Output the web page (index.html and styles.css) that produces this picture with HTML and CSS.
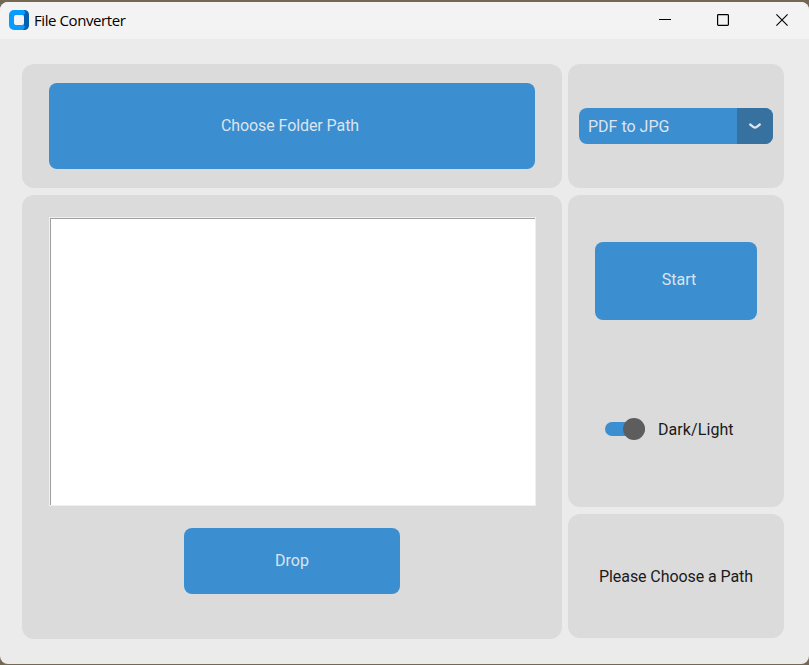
FILE: index.html
```html
<!DOCTYPE html>
<html lang="en">
<head>
<meta charset="utf-8">
<title>File Converter</title>
<link rel="stylesheet" href="styles.css">
</head>
<body>
<div class="window">
  <header class="titlebar">
    <svg class="logo" width="20" height="20" viewBox="0 0 20 20">
      <path fill="#069bff" d="M5 0h11l-1 20H5a5 5 0 0 1-5-5V5a5 5 0 0 1 5-5z"/>
      <path fill="#0560ae" d="M14 0h1.500a4.500 4.500 0 0 1 4.500 4.500v11a4.500 4.500 0 0 1-4.500 4.500H14l1-5V5z"/>
      <path fill="#069bff" d="M11 0h4l1.500 2.500L14 6h-3zM11 14h3l2 3-2 3h-3z"/>
      <rect x="5" y="5" width="10" height="10" rx="2" fill="#f3f3f3"/>
    </svg>
    <h1 class="title">File Converter</h1>
    <div class="controls">
      <svg width="12" height="12" viewBox="0 0 12 12"><path d="M0 5.500h12" stroke="#000"/></svg>
      <svg width="12" height="12" viewBox="0 0 12 12"><rect x=".6" y=".6" width="10.800" height="10.800" rx=".8" fill="none" stroke="#000" stroke-width="1.200"/></svg>
      <svg class="close" width="12" height="12" viewBox="0 0 12 12"><path d="M.4.400l11.200 11.200M11.600.400L.4 11.600" stroke="#000" stroke-width="1.100"/></svg>
    </div>
  </header>
  <main class="content">
    <div class="column">
      <section class="panel folder"><button class="btn choose">Choose Folder Path</button></section>
      <section class="panel files">
        <div class="listbox"></div>
        <button class="btn drop">Drop</button>
      </section>
    </div>
    <div class="column">
      <section class="panel format">
        <button class="select">
          <span class="value">PDF to JPG</span>
          <span class="arrow"><svg width="14" height="8" viewBox="0 0 14 8"><path d="M2.200 2.500L5.500 5.100Q7 6 8.500 5.100L11.800 2.500" fill="none" stroke="#dce4ee" stroke-width="2.300" stroke-linecap="round"/></svg></span>
        </button>
      </section>
      <section class="panel actions">
        <button class="btn start">Start</button>
        <div class="switch"><span class="track"><span class="knob"></span></span><span class="label">Dark/Light</span></div>
      </section>
      <section class="panel status">Please Choose a Path</section>
    </div>
  </main>
</div>
</body>
</html>
```
FILE: styles.css
```css
* { box-sizing: border-box; }
body {
  margin: 0;
  height: 665px;
  padding: 2px 0 1px;
  background: #746854;
  font: 16px/20px Roboto, sans-serif;
  color: #1a1a1a;
  overflow: hidden;
}
button { border: 0; font: inherit; color: #dce4ee; }
svg { display: block; }
.window { height: 662px; background: #ebebeb; border-radius: 8px; overflow: hidden; }
.titlebar {
  display: flex;
  align-items: center;
  height: 37px;
  padding: 0 21px 1px 9px;
  background: #f3f3f3;
}
.title { margin: 0 0 0 5px; font: 400 15px/20px "Open Sans", sans-serif; letter-spacing: -.42px; color: #000; }
.controls { display: flex; gap: 46px; margin-left: auto; }
.close { margin-left: 1px; }
.content { display: flex; gap: 6px; padding: 25px 25px 0 22px; }
.column { display: flex; flex-direction: column; gap: 7px; }
.column:first-child { width: 540px; }
.column:last-child { width: 216px; }
.panel { background: #dbdbdb; border-radius: 12px; }
.btn { display: block; padding: 0; background: #3b8ed0; border-radius: 8px; }
.folder { height: 124px; padding: 19px 27px; }
.choose { width: 486px; height: 86px; padding-right: 4px; letter-spacing: -.08px; }
.files { height: 444px; padding: 22px 26px 0 27px; }
.listbox {
  width: 487px;
  height: 289px;
  border: 1px solid #f0f0f0;
  background: #fff;
  box-shadow: inset 1px 1px #a0a0a0;
}
.drop { width: 216px; height: 66px; margin: 22px 0 0 135px; }
.format { height: 124px; padding: 44px 11px; }
.select {
  display: flex;
  width: 194px;
  height: 36px;
  padding: 0;
  border-radius: 8px;
  overflow: hidden;
  background: #3b8ed0;
}
.value { width: 158px; padding: 9px 9px 7px; text-align: left; }
.arrow { display: flex; align-items: center; justify-content: center; width: 36px; height: 36px; background: #36719f; }
.actions { height: 312px; padding: 47px 27px 0; }
.start { width: 162px; height: 78px; padding: 0 0 3px 6px; }
.switch { display: flex; align-items: center; gap: 13px; height: 22px; margin: 98px 0 0 10px; }
.track { display: flex; align-items: center; justify-content: flex-end; width: 40px; height: 14px; border-radius: 7px; background: #3b8ed0; }
.knob { width: 22px; height: 22px; flex: none; border-radius: 50%; background: #5d5d5d; }
.label { padding-top: 2px; letter-spacing: .08px; }
.status { display: flex; align-items: center; justify-content: center; height: 124px; padding-top: 2px; letter-spacing: -.08px; }
```
